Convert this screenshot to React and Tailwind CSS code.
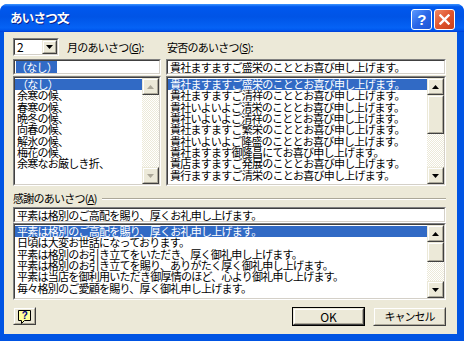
import React from 'react';

const FONT = "font-['Noto_Sans_CJK_JP',sans-serif]";

const monthItems = [
    '（なし）',
    '余寒の候、',
    '春寒の候、',
    '晩冬の候、',
    '向春の候、',
    '解氷の候、',
    '梅花の候、',
    '余寒なお厳しき折、',
];

const safetyItems = [
    '貴社ますますご盛栄のこととお喜び申し上げます。',
    '貴社ますますご清祥のこととお喜び申し上げます。',
    '貴社いよいよご清栄のこととお喜び申し上げます。',
    '貴社いよいよご清祥のこととお喜び申し上げます。',
    '貴社ますますご繁栄のこととお喜び申し上げます。',
    '貴社いよいよご隆盛のこととお喜び申し上げます。',
    '貴社ますます御隆昌にてお喜び申し上げます。',
    '貴店ますますご発展のこととお喜び申し上げます。',
    '貴行ますますご清栄のことお喜び申し上げます。',
];

const thanksItems = [
    '平素は格別のご高配を賜り、厚くお礼申し上げます。',
    '日頃は大変お世話になっております。',
    '平素は格別のお引き立てをいただき、厚く御礼申し上げます。',
    '平素は格別のお引き立てを賜り、ありがたく厚く御礼申し上げます。',
    '平素は当店を御利用いただき御厚情のほど、心より御礼申し上げます。',
    '毎々格別のご愛顧を賜り、厚く御礼申し上げます。',
];

function Arrow({ dir, disabled }) {
    const color = disabled ? '#aca899' : '#000';
    return (
        <svg width="7" height="4" viewBox="0 0 7 4">
            <polygon points={dir === 'up' ? '3.5,0 7,4 0,4' : '0,0 7,0 3.5,4'} fill={color} />
        </svg>
    );
}

function Raised({ className = '', children }) {
    return (
        <div className={`border border-t-[#ece9d8] border-l-[#ece9d8] border-b-[#404040] border-r-[#404040] bg-[#ece9d8] ${className}`}>
            <div className="h-full border border-t-white border-l-white border-b-[#aca899] border-r-[#aca899] flex items-center justify-center">
                {children}
            </div>
        </div>
    );
}

function Sunken({ className = '', children }) {
    return (
        <div className={`border border-t-[#808080] border-l-[#808080] border-b-white border-r-white ${className}`}>
            <div className="h-full border border-t-[#404040] border-l-[#404040] border-b-[#d4d0c8] border-r-[#d4d0c8] bg-white">
                {children}
            </div>
        </div>
    );
}

function ScrollBar({ thumb, disabled }) {
    return (
        <div className="w-[17px] flex flex-col bg-[image:repeating-conic-gradient(#ffffff_0_25%,#ece9d8_0_50%)] bg-[length:2px_2px]">
            <Raised className="h-[17px]"><Arrow dir="up" disabled={disabled} /></Raised>
            {thumb && <Raised className={thumb} />}
            <div className="flex-1" />
            <Raised className="h-[17px]"><Arrow dir="down" disabled={disabled} /></Raised>
        </div>
    );
}

function ListBox({ items, className, thumb, disabled }) {
    return (
        <Sunken className={className}>
            <div className="flex h-full">
                <div className="flex-1 min-w-0 pt-[1px]">
                    {items.map((t, i) => (
                        <div
                            key={i}
                            className={`h-[11.33px] leading-[11.33px] pl-[2px] whitespace-nowrap ${i === 0 ? 'bg-[#316ac5] text-white' : ''}`}
                        >
                            {t}
                        </div>
                    ))}
                </div>
                <ScrollBar thumb={thumb} disabled={disabled} />
            </div>
        </Sunken>
    );
}

function TitleBar() {
    return (
        <div className="h-[28px] flex items-center pl-[10px] pr-[9px] rounded-t-[7px] bg-[linear-gradient(180deg,#3d95ff,#0058ee_10%,#0054e6_45%,#0562f5_85%,#0058ee_93%,#003dd7)]">
            <span className="flex-1 text-white font-bold text-[12.5px] [text-shadow:1px_1px_#0a1e8a]">あいさつ文</span>
            {/* caption buttons */}
            <div className="flex gap-[2px] mt-[3px]">
                <div className="w-[21px] h-[21px] rounded-[3px] border border-white bg-[linear-gradient(135deg,#5c9bff,#2a66e8_50%,#1d54d4)] flex items-center justify-center text-white font-bold text-[15px] leading-none font-['Liberation_Sans',sans-serif]">
                    ?
                </div>
                <div className="w-[21px] h-[21px] rounded-[3px] border border-white bg-[linear-gradient(135deg,#f08a66,#e0552e_50%,#c8401c)] flex items-center justify-center">
                    <svg width="11" height="11" viewBox="0 0 11 11">
                        <path d="M1.5 1.5l8 8M9.5 1.5l-8 8" stroke="#fff" strokeWidth="2.4" strokeLinecap="square" />
                    </svg>
                </div>
            </div>
        </div>
    );
}

export default function App() {
    return (
        <div className={`w-[464px] h-[341px] bg-white text-black text-[11px] tracking-[-0.75px] ${FONT}`}>
            <div className="mt-[4px] h-[337px] flex flex-col rounded-t-[8px] bg-[#0054e3]">
                <TitleBar />

                <div className="flex-1 ml-[4px] mr-[7px] mb-[7px] bg-[#ece9d8] flex flex-col pt-[6px] pl-[9px] pr-[11px]">
                    <div className="flex gap-[5px]">
                        {/* month greetings */}
                        <div className="w-[148px] flex flex-col">
                            <div className="h-[18px] flex items-center">
                                <Sunken className="w-[46px] h-[18px]">
                                    <div className="flex h-full items-center">
                                        <span className="flex-1 pl-[2px] text-[12px]">2</span>
                                        <Raised className="w-[15px] h-full"><Arrow dir="down" /></Raised>
                                    </div>
                                </Sunken>
                                <span className="ml-[8px]">月のあいさつ(<span className="underline">G</span>):</span>
                            </div>
                            <Sunken className="mt-[3px] h-[16px]">
                                <div className="h-full flex items-center pl-[1px]">
                                    <span className="bg-[#316ac5] text-white leading-[12px]">（なし）</span>
                                </div>
                            </Sunken>
                            <ListBox items={monthItems} className="mt-[1px] h-[110px]" disabled />
                        </div>

                        {/* safety greetings */}
                        <div className="flex-1 flex flex-col">
                            <div className="h-[18px] flex items-center pl-[1px]">
                                安否のあいさつ(<span className="underline">S</span>):
                            </div>
                            <Sunken className="mt-[3px] h-[16px]">
                                <div className="h-full flex items-center pl-[2px]">
                                    貴社ますますご盛栄のこととお喜び申し上げます。
                                </div>
                            </Sunken>
                            <ListBox items={safetyItems} className="mt-[1px] h-[110px]" thumb="h-[39px]" />
                        </div>
                    </div>

                    {/* thanks greetings */}
                    <div className="mt-[6px] h-[13px] flex items-center gap-[5px]">
                        <span>感謝のあいさつ(<span className="underline">A</span>)</span>
                        <div className="flex-1 border-t border-b border-t-[#aca899] border-b-white" />
                    </div>
                    <Sunken className="mt-[2px] h-[16px]">
                        <div className="h-full flex items-center pl-[2px]">
                            平素は格別のご高配を賜り、厚くお礼申し上げます。
                        </div>
                    </Sunken>
                    <ListBox items={thanksItems} className="h-[77px]" thumb="h-[20px]" />

                    {/* dialog buttons */}
                    <div className="mt-[7px] flex items-start">
                        <Raised className="w-[23px] h-[18px]">
                            <svg width="15" height="15" viewBox="0 0 15 15">
                                <path d="M1.5 1.5h12v10h-6l-3 3v-3h-3z" fill="#ffff9c" stroke="#000" />
                                <text x="7.5" y="10" textAnchor="middle" fontSize="10" fontWeight="bold" fill="#000080" fontFamily="Liberation Sans">?</text>
                            </svg>
                        </Raised>
                        <div className="flex-1" />
                        <div className="w-[73px] h-[19px] border border-black">
                            <Raised className="h-full">
                                <span className="text-[12px] tracking-normal">OK</span>
                            </Raised>
                        </div>
                        <Raised className="ml-[8px] w-[73px] h-[19px]">
                            <span className="tracking-[-1px]">キャンセル</span>
                        </Raised>
                    </div>
                </div>
            </div>
        </div>
    );
}
